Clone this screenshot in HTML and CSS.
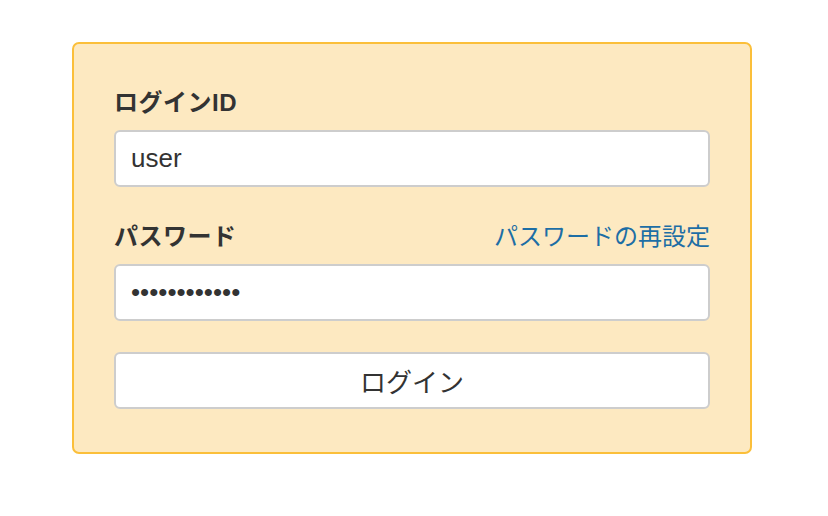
FILE: index.html
```html
<!DOCTYPE html>
<html lang="ja">
<head>
<meta charset="utf-8">
<title>ログイン</title>
<link rel="stylesheet" href="styles.css">
</head>
<body>
<div class="page">
  <form class="card">
    <label class="label" for="loginid">ログインID</label>
    <input class="field" id="loginid" type="text" value="user">
    <div class="label-row">
      <label class="label" for="pw">パスワード</label>
      <a class="link" href="#">パスワードの再設定</a>
    </div>
    <input class="field" id="pw" type="password" value="passwordpass">
    <button class="btn" type="button">ログイン</button>
  </form>
</div>
</body>
</html>
```

FILE: styles.css
```css
* { box-sizing: border-box; }
html, body { margin: 0; background: #fff; }
body {
  font-family: "Liberation Sans", "Noto Sans CJK JP", sans-serif;
  color: #333;
}
.page {
  padding: 42px 0 0 72px;
}
.card {
  width: 680px;
  display: flex;
  flex-direction: column;
  padding: 44px 40px 43px 40px;
  background: #fde9c1;
  border: 2px solid #fbbf3a;
  border-radius: 7px;
}
.label {
  display: block;
  font-size: 24px;
  line-height: 30px;
  font-weight: bold;
  color: #333;
  margin-bottom: 12px;
  letter-spacing: 0.5px;
}
.label-row {
  display: flex;
  justify-content: space-between;
  align-items: flex-start;
  margin-top: 35px;
}
.link {
  font-size: 24px;
  line-height: 30px;
  color: #1d6ea5;
  text-decoration: none;
}
.field {
  display: block;
  width: 100%;
  height: 57px;
  padding: 0 15px;
  font-family: "Liberation Sans", "Noto Sans CJK JP", sans-serif;
  font-size: 26px;
  color: #333;
  background: #fff;
  border: 2px solid #cdcdcd;
  border-radius: 6px;
  outline: none;
}
.btn {
  display: block;
  width: 100%;
  height: 57px;
  margin-top: 31px;
  font-family: "Liberation Sans", "Noto Sans CJK JP", sans-serif;
  font-size: 26px;
  color: #333;
  background: #fff;
  border: 2px solid #cdcdcd;
  border-radius: 6px;
}
```
